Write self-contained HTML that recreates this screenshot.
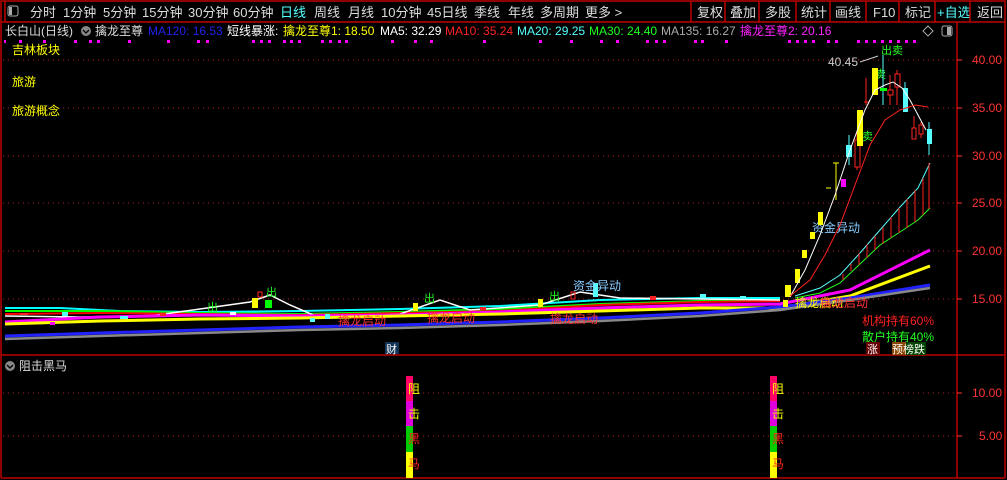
<!DOCTYPE html>
<html><head><meta charset="utf-8"><style>
body{margin:0;background:#000;width:1007px;height:480px;overflow:hidden;font-family:"Liberation Sans","Noto Sans CJK SC",sans-serif}
svg{position:absolute;left:0;top:0}
text{font-family:"Liberation Sans","Noto Sans CJK SC",sans-serif}
</style></head><body>
<svg width="1007" height="480" viewBox="0 0 1007 480">
<rect width="1007" height="480" fill="#000"/>
<rect x="1" y="1" width="1004" height="21" fill="none" stroke="#b00" stroke-width="1.5"/>
<rect x="8" y="6" width="10" height="10" rx="2" fill="none" stroke="#aaa"/><rect x="9" y="7" width="3" height="8" fill="#aaa"/>
<g font-size="13" fill="#ddd">
<text x="30" y="17">分时</text><text x="63" y="17">1分钟</text><text x="103" y="17">5分钟</text><text x="142" y="17">15分钟</text><text x="188" y="17">30分钟</text><text x="233" y="17">60分钟</text>
<text x="280" y="17" fill="#5ff">日线</text><text x="314" y="17">周线</text><text x="348" y="17">月线</text><text x="381" y="17">10分钟</text><text x="427" y="17">45日线</text><text x="474" y="17">季线</text><text x="508" y="17">年线</text><text x="540" y="17">多周期</text><text x="585" y="17">更多 &gt;</text>
<text x="697" y="17">复权</text><text x="730" y="17">叠加</text><text x="765" y="17">多股</text><text x="801" y="17">统计</text><text x="835" y="17">画线</text><text x="873" y="17">F10</text><text x="905" y="17">标记</text><text x="937" y="17" fill="#5ff">+自选</text><text x="977" y="17">返回</text>
</g>
<g stroke="#b00" stroke-width="1.5"><line x1="5" y1="1" x2="5" y2="22"/><line x1="691" y1="1" x2="691" y2="22"/><line x1="725" y1="1" x2="725" y2="22"/><line x1="759" y1="1" x2="759" y2="22"/><line x1="796" y1="1" x2="796" y2="22"/><line x1="830" y1="1" x2="830" y2="22"/><line x1="866" y1="1" x2="866" y2="22"/><line x1="899" y1="1" x2="899" y2="22"/><line x1="935" y1="1" x2="935" y2="22"/><line x1="970" y1="1" x2="970" y2="22"/></g>
<g stroke="#b00" stroke-width="1.5" fill="none"><line x1="957" y1="22" x2="957" y2="478"/><line x1="1" y1="22" x2="1" y2="478"/><line x1="1005" y1="22" x2="1005" y2="478"/><line x1="1" y1="355" x2="1005" y2="355"/><line x1="1" y1="478" x2="1005" y2="478"/></g>
<g font-size="12">
<text x="5" y="35" fill="#ddd">长白山(日线)</text>
<circle cx="86" cy="31" r="5" fill="#888"/><path d="M83 30l3 3 3-3" stroke="#000" stroke-width="1.3" fill="none"/>
<text x="95" y="35" fill="#ddd">擒龙至尊</text>
<text x="148" y="35" fill="#22e">MA120: 16.53</text>
<text x="227" y="35" fill="#fff">短线暴涨:</text>
<text x="283" y="35" fill="#ff0">擒龙至尊1: 18.50</text>
<text x="380" y="35" fill="#fff">MA5: 32.29</text>
<text x="445" y="35" fill="#f22">MA10: 35.24</text>
<text x="517" y="35" fill="#5ff">MA20: 29.25</text>
<text x="589" y="35" fill="#2f2">MA30: 24.40</text>
<text x="661" y="35" fill="#aaa">MA135: 16.27</text>
<text x="740" y="35" fill="#f2f">擒龙至尊2: 20.16</text>
</g>
<path d="M928 26l5 5-5 5-5-5z" stroke="#aaa" fill="none"/>
<rect x="942" y="26" width="10" height="10" rx="2" fill="none" stroke="#aaa"/><rect x="947" y="27" width="4" height="8" fill="#aaa"/>
<g fill="#f0f">
<rect x="4" y="40" width="2" height="3"/><rect x="19" y="40" width="3" height="3"/><rect x="43" y="40" width="3" height="3"/><rect x="74" y="40" width="3" height="3"/><rect x="89" y="40" width="3" height="3"/><rect x="97" y="40" width="3" height="3"/><rect x="128" y="40" width="3" height="3"/><rect x="167" y="40" width="3" height="3"/><rect x="197" y="40" width="3" height="3"/><rect x="206" y="40" width="3" height="3"/><rect x="252" y="40" width="3" height="3"/><rect x="260" y="40" width="3" height="3"/><rect x="268" y="40" width="3" height="3"/><rect x="283" y="40" width="3" height="3"/><rect x="290" y="40" width="3" height="3"/><rect x="298" y="40" width="3" height="3"/><rect x="321" y="40" width="3" height="3"/><rect x="329" y="40" width="3" height="3"/><rect x="338" y="40" width="3" height="3"/><rect x="345" y="40" width="3" height="3"/><rect x="391" y="40" width="3" height="3"/><rect x="414" y="40" width="3" height="3"/><rect x="430" y="40" width="3" height="3"/><rect x="483" y="40" width="3" height="3"/><rect x="539" y="40" width="3" height="3"/><rect x="570" y="40" width="3" height="3"/><rect x="600" y="40" width="3" height="3"/><rect x="616" y="40" width="3" height="3"/><rect x="646" y="40" width="3" height="3"/><rect x="655" y="40" width="3" height="3"/><rect x="663" y="40" width="3" height="3"/><rect x="694" y="40" width="3" height="3"/><rect x="701" y="40" width="3" height="3"/><rect x="725" y="40" width="3" height="3"/><rect x="788" y="40" width="3" height="3"/><rect x="796" y="40" width="3" height="3"/><rect x="804" y="40" width="3" height="3"/><rect x="812" y="40" width="3" height="3"/><rect x="827" y="40" width="3" height="3"/><rect x="835" y="40" width="3" height="3"/><rect x="857" y="40" width="3" height="3"/><rect x="865" y="40" width="3" height="3"/><rect x="873" y="40" width="3" height="3"/><rect x="881" y="40" width="3" height="3"/><rect x="889" y="40" width="3" height="3"/><rect x="897" y="40" width="3" height="3"/><rect x="905" y="40" width="3" height="3"/><rect x="913" y="40" width="3" height="3"/>
</g>
<g stroke="#a22" stroke-width="1" stroke-dasharray="1 4">
<line x1="3" y1="60" x2="955" y2="60"/><line x1="3" y1="108" x2="955" y2="108"/><line x1="3" y1="156" x2="955" y2="156"/><line x1="3" y1="203" x2="955" y2="203"/><line x1="3" y1="251" x2="955" y2="251"/><line x1="3" y1="299" x2="955" y2="299"/>
<line x1="3" y1="393" x2="955" y2="393"/><line x1="3" y1="436" x2="955" y2="436"/>
</g>
<g font-size="12" fill="#f33" stroke="#f33" stroke-width="1">
<line x1="957" y1="60" x2="962" y2="60"/><line x1="957" y1="108" x2="962" y2="108"/><line x1="957" y1="156" x2="962" y2="156"/><line x1="957" y1="203" x2="962" y2="203"/><line x1="957" y1="251" x2="962" y2="251"/><line x1="957" y1="299" x2="962" y2="299"/><line x1="957" y1="393" x2="962" y2="393"/><line x1="957" y1="436" x2="962" y2="436"/>
<g stroke="none"><text x="972" y="64">40.00</text><text x="972" y="112">35.00</text><text x="972" y="160">30.00</text><text x="972" y="207">25.00</text><text x="972" y="255">20.00</text><text x="972" y="303">15.00</text><text x="972" y="397">10.00</text><text x="979" y="440">5.00</text></g>
</g>
<g font-size="12" fill="#ff0"><text x="12" y="54">吉林板块</text><text x="12" y="86">旅游</text><text x="12" y="115">旅游概念</text></g>
<g fill="none" stroke-width="2">
<polyline stroke="#0ff" points="5,308 60,308 120,311 200,312 300,311 400,309 500,306 600,300 700,298 780,298"/>
<polyline stroke="#0f0" points="5,311 100,311 200,313 300,314 400,312 500,309 600,304 700,301 780,300"/>
<polyline stroke="#f00" points="5,314 100,313 200,314 300,315 400,313 500,311 600,305 700,302 780,301"/>
<polyline stroke="#fff" stroke-width="1.5" points="5,316 80,317 150,316 250,302 270,295 290,305 320,318 400,314 440,300 470,310 540,305 580,292 620,298 700,299 780,300"/>
<polyline stroke="#f0f" stroke-width="3" points="5,322 100,317 200,315 300,316 400,315 500,312 600,308 700,305 780,304 850,290 930,250"/>
<polyline stroke="#ff0" stroke-width="3" points="5,324 100,321 200,319 300,318 400,316 500,314 600,311 700,308 780,308 850,296 930,266"/>
<polyline stroke="#22f" stroke-width="3" points="5,336 100,333 200,330 300,327 400,325 500,322 600,318 700,313 780,307 850,298 930,285"/>
<polyline stroke="#888" stroke-width="2.5" points="5,339 100,336 200,333 300,330 400,328 500,325 600,321 700,316 780,310 850,300 930,288"/>
</g>
<g>
<rect x="252" y="298" width="6" height="10" fill="#ff0"/><rect x="265" y="300" width="7" height="8" fill="#0f0"/><rect x="258" y="292" width="4" height="5" fill="none" stroke="#f22"/>
<rect x="413" y="303" width="5" height="8" fill="#ff0"/><rect x="538" y="299" width="5" height="8" fill="#ff0"/><rect x="593" y="283" width="5" height="14" fill="#5ff"/><rect x="571" y="292" width="4" height="7" fill="none" stroke="#f22"/>
<rect x="783" y="300" width="5" height="7" fill="#ff0"/><rect x="62" y="312" width="6" height="4" fill="#5ff"/><rect x="50" y="322" width="5" height="3" fill="#f0f"/><rect x="310" y="318" width="5" height="4" fill="#5ff"/><rect x="325" y="314" width="5" height="5" fill="#5ff"/>
<rect x="20" y="313" width="8" height="2" fill="#f22"/><rect x="120" y="316" width="8" height="3" fill="#5ff"/><rect x="160" y="313" width="6" height="3" fill="#f22"/><rect x="230" y="312" width="6" height="3" fill="#fff"/><rect x="480" y="307" width="6" height="3" fill="#f22"/><rect x="650" y="296" width="6" height="4" fill="#f22"/><rect x="700" y="294" width="6" height="4" fill="#5ff"/><rect x="740" y="296" width="6" height="3" fill="#5ff"/>
</g>
<g font-size="11" fill="#2f2"><text x="207" y="311">出</text><text x="266" y="296">出</text><text x="424" y="302">出</text><text x="549" y="300">出</text><text x="881" y="54">出卖</text><text x="875" y="78">卖</text><text x="862" y="140">卖</text></g>
<g font-size="12" fill="#f33"><text x="338" y="325">擒龙启动</text><text x="427" y="322">擒龙启动</text><text x="550" y="323">擒龙启动</text><text x="795" y="307" fill="#ff0">擒龙启动</text><text x="820" y="307">擒龙启动</text></g>
<text x="573" y="290" font-size="12" fill="#8cf">资金异动</text>
<text x="812" y="232" font-size="12" fill="#8cf">资金异动</text>
<rect x="385" y="342" width="14" height="12" fill="#135"/><text x="386" y="353" font-size="11" fill="#fff">财</text>
<g>
<rect x="785" y="285" width="6" height="12" fill="#ff0"/>
<rect x="795" y="269" width="5" height="14" fill="#ff0"/>
<rect x="802" y="250" width="5" height="8" fill="#ff0"/>
<rect x="810" y="232" width="5" height="7" fill="#ff0"/>
<rect x="818" y="212" width="5" height="13" fill="#ff0"/>
<line x1="826" y1="188" x2="831" y2="188" stroke="#ff0"/>
<line x1="836" y1="163" x2="836" y2="200" stroke="#ff0"/><line x1="833" y1="163" x2="839" y2="163" stroke="#ff0"/>
<rect x="841" y="179" width="5" height="8" fill="#f0f"/>
<line x1="849" y1="135" x2="849" y2="165" stroke="#5ff"/><rect x="846" y="145" width="6" height="12" fill="#5ff"/>
<line x1="857" y1="130" x2="857" y2="170" stroke="#f22"/><rect x="855" y="140" width="5" height="27" fill="#000" stroke="#f22"/>
<rect x="857" y="110" width="6" height="36" fill="#ff0"/>
<line x1="866" y1="78" x2="866" y2="105" stroke="#f22"/><line x1="864" y1="102" x2="869" y2="102" stroke="#f22"/>
<rect x="872" y="68" width="6" height="27" fill="#ff0"/>
<line x1="883" y1="55" x2="883" y2="105" stroke="#5ff"/><rect x="880" y="88" width="7" height="3" fill="#0f0"/>
<line x1="890" y1="75" x2="890" y2="105" stroke="#f22"/><rect x="888" y="90" width="5" height="5" fill="#000" stroke="#f22"/>
<line x1="897" y1="70" x2="897" y2="105" stroke="#f22"/><rect x="895" y="74" width="5" height="13" fill="#000" stroke="#f22"/>
<line x1="905" y1="82" x2="905" y2="112" stroke="#5ff"/><rect x="903" y="88" width="5" height="24" fill="#5ff"/>
<line x1="914" y1="116" x2="914" y2="139" stroke="#f22"/><rect x="912" y="128" width="4" height="11" fill="#000" stroke="#f22"/>
<line x1="921" y1="122" x2="921" y2="138" stroke="#f22"/><rect x="919" y="125" width="4" height="9" fill="#000" stroke="#f22"/>
<line x1="929" y1="122" x2="929" y2="155" stroke="#5ff"/><rect x="927" y="129" width="5" height="15" fill="#5ff"/>
</g>
<g fill="none" stroke-width="1">
<polyline stroke="#fff" points="790,297 805,270 820,235 835,195 850,150 865,110 875,90 885,85 893,82 902,88 910,100 918,115 926,130"/>
<polyline stroke="#f22" points="790,296 810,280 825,255 840,225 855,185 870,145 885,120 900,110 915,105 928,107"/>
<polyline stroke="#5ff" points="795,296 820,288 840,275 860,253 880,230 900,207 918,188 930,163"/>
<polyline stroke="#2f2" points="795,298 820,293 840,283 860,264 880,245 900,232 918,220 930,208"/>
<g stroke="#f22"><line x1="843" y1="280" x2="843" y2="274"/><line x1="851" y1="271" x2="851" y2="264"/><line x1="859" y1="265" x2="859" y2="253"/><line x1="867" y1="258" x2="867" y2="244"/><line x1="875" y1="250" x2="875" y2="236"/><line x1="883" y1="244" x2="883" y2="227"/><line x1="891" y1="238" x2="891" y2="217"/><line x1="899" y1="233" x2="899" y2="208"/><line x1="907" y1="228" x2="907" y2="199"/><line x1="915" y1="222" x2="915" y2="190"/><line x1="923" y1="215" x2="923" y2="178"/><line x1="929" y1="209" x2="929" y2="163"/></g>
</g>
<text x="828" y="66" font-size="12" fill="#ccc">40.45</text>
<path d="M860 62 L878 56" stroke="#ccc" fill="none"/>
<text x="862" y="325" font-size="12" fill="#f22">机构持有60%</text>
<text x="862" y="341" font-size="12" fill="#2f2">散户持有40%</text>
<rect x="866" y="342" width="14" height="13" fill="#600"/><text x="867" y="353" font-size="11" fill="#fff">涨</text>
<rect x="892" y="342" width="14" height="13" fill="#840"/><rect x="906" y="342" width="20" height="13" fill="#040"/><text x="892" y="353" font-size="11" fill="#fff">预榜跌</text>
<circle cx="10" cy="366" r="5" fill="#888"/><path d="M7 365l3 3 3-3" stroke="#000" stroke-width="1.3" fill="none"/>
<text x="19" y="370" font-size="12" fill="#ddd">阻击黑马</text>
<g>
<rect x="406" y="376" width="7" height="25" fill="#f06"/><rect x="406" y="401" width="7" height="25" fill="#d0d"/><rect x="406" y="426" width="7" height="26" fill="#0c0"/><rect x="406" y="452" width="7" height="26" fill="#ff0"/>
<rect x="770" y="376" width="7" height="25" fill="#f06"/><rect x="770" y="401" width="7" height="25" fill="#d0d"/><rect x="770" y="426" width="7" height="26" fill="#0c0"/><rect x="770" y="452" width="7" height="26" fill="#ff0"/>
<g font-size="12"><text x="408" y="393" fill="#ff0">阻</text><text x="408" y="418" fill="#ff0">击</text><text x="408" y="443" fill="#f22">黑</text><text x="408" y="468" fill="#f22">马</text>
<text x="772" y="393" fill="#ff0">阻</text><text x="772" y="418" fill="#ff0">击</text><text x="772" y="443" fill="#f22">黑</text><text x="772" y="468" fill="#f22">马</text></g>
</g>
</svg>
</body></html>
